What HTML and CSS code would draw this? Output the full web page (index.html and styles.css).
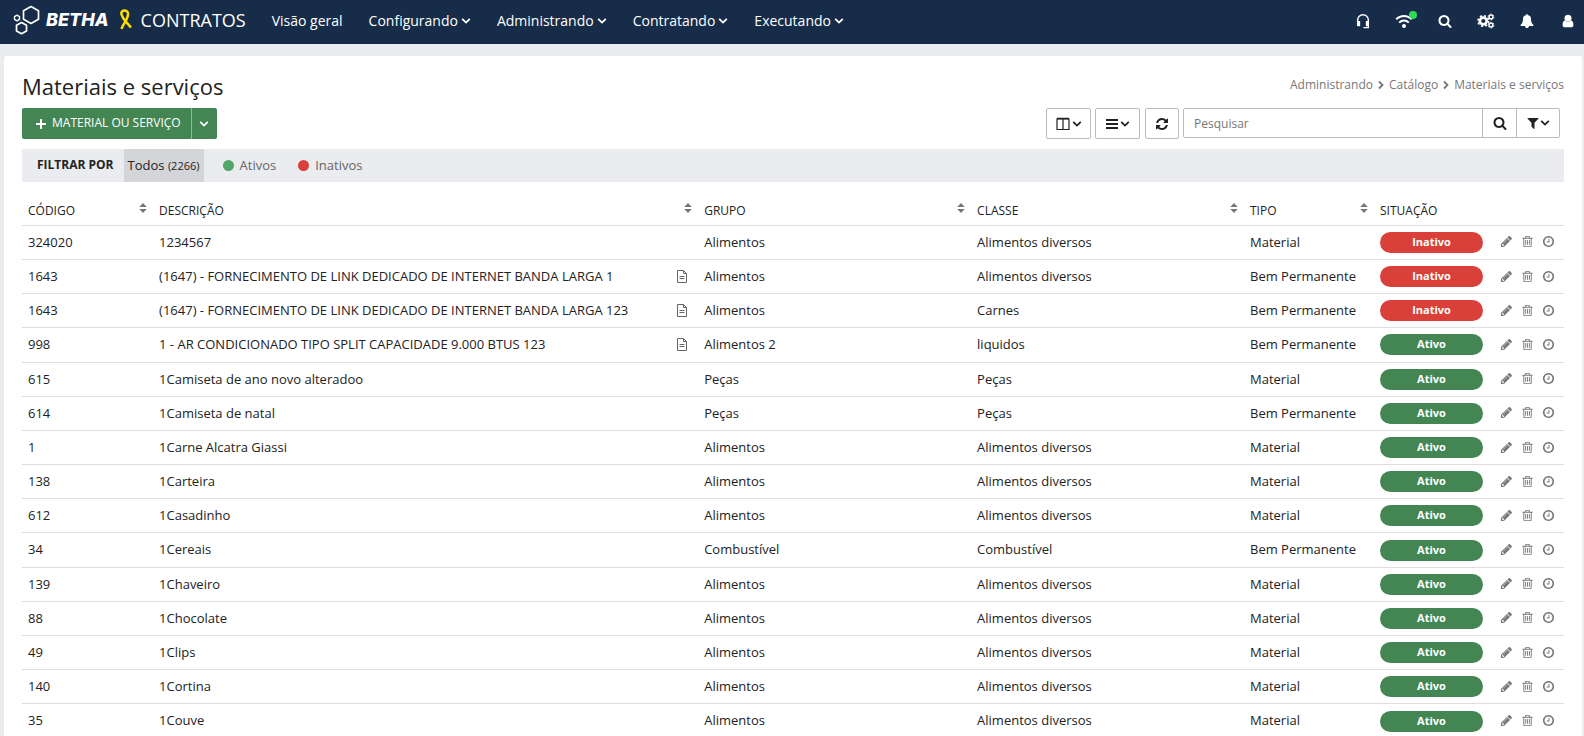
FILE: index.html
```html
<!DOCTYPE html>
<html lang="pt-BR">
<head>
<meta charset="utf-8">
<meta name="viewport" content="width=device-width, initial-scale=1">
<title>Materiais e serviços</title>
<link rel="stylesheet" href="styles.css">
</head>
<body>
<svg class="sprite" aria-hidden="true">
  <symbol id="search" viewBox="0 0 1792 1792"><path d="M1216 832q0-185-131.500-316.500t-316.500-131.500-316.500 131.500-131.500 316.500 131.500 316.500 316.500 131.500 316.500-131.500 131.500-316.500zm512 832q0 52-38 90t-90 38q-54 0-90-38l-343-342q-179 124-399 124-143 0-273.500-55.500t-225-150-150-225-55.500-273.500 55.500-273.500 150-225 225-150 273.500-55.500 273.500 55.500 225 150 150 225 55.500 273.500q0 220-124 399l343 343q37 37 37 90z"/></symbol>
  <symbol id="bell" viewBox="0 0 1792 1792"><path d="M1728 1408q0 52-38 90t-90 38h-448q0 106-75 181t-181 75-181-75-75-181h-448q-52 0-90-38t-38-90q50-42 91-88t85-119.500 74.500-158.500 50-206 19.500-260q0-152 117-282.500t307-158.500q-8-19-8-39 0-40 28-68t68-28 68 28 28 68q0 20-8 39 190 28 307 158.500t117 282.500q0 139 19.500 260t50 206 74.500 158.500 85 119.500 91 88z"/></symbol>
  <symbol id="user" viewBox="0 0 14 14"><circle cx="7" cy="4.300" r="3.500"/><path d="M3.700 6.500C2.300 6.900 1.600 8.600 1.600 11c0 1.400.9 2.300 2.200 2.300h6.400c1.300 0 2.200-.9 2.200-2.300 0-2.400-.7-4.100-2.100-4.500a4.600 4.600 0 0 1-6.600 0z"/></symbol>
  <symbol id="headset" viewBox="0 0 16 18"><path d="M2 10V8a6 6 0 0 1 12 0v2" fill="none" stroke="currentColor" stroke-width="1.600"/><path d="M1.200 9h3.600v6H2.600a1.400 1.400 0 0 1-1.400-1.400zM11.200 9h3.600v6h-3.600z"/><path d="M14 14v2.500H8.500" fill="none" stroke="currentColor" stroke-width="1.500"/></symbol>
  <symbol id="wifi" viewBox="0 0 18 16"><g fill="none" stroke="currentColor" stroke-width="2"><path d="M1.200 6.200C5.500 1.800 12.500 1.800 16.800 6.200"/><path d="M4.200 9.600c2.700-2.700 6.900-2.700 9.600 0"/></g><circle cx="9" cy="13" r="2"/></symbol>
  <symbol id="gears" viewBox="0 0 18 16"><g fill="none" stroke="currentColor"><circle cx="6.300" cy="8" r="3.400" stroke-width="2.600"/><circle cx="6.300" cy="8" r="5.300" stroke-width="1.600" stroke-dasharray="2.160 2"/><circle cx="14" cy="3.900" r="1.900" stroke-width="1.400"/><circle cx="14" cy="3.900" r="2.900" stroke-width="1" stroke-dasharray="1.500 1.530"/><circle cx="14" cy="12.100" r="1.900" stroke-width="1.400"/><circle cx="14" cy="12.100" r="2.900" stroke-width="1" stroke-dasharray="1.500 1.530"/></g></symbol>
  <symbol id="pencil" viewBox="0 0 1792 1792"><path d="M491 1536l91-91-235-235-91 91v107h128v128h107zm523-928q0-22-22-22-10 0-17 7l-542 542q-7 7-7 17 0 22 22 22 10 0 17-7l542-542q7-7 7-17zm-54-192l416 416-832 832h-416v-416zm683 96q0 53-37 90l-166 166-416-416 166-165q36-38 90-38 53 0 91 38l235 234q37 39 37 91z"/></symbol>
  <symbol id="trash" viewBox="0 0 1792 1792"><path d="M704 736v576q0 14-9 23t-23 9h-64q-14 0-23-9t-9-23v-576q0-14 9-23t23-9h64q14 0 23 9t9 23zm256 0v576q0 14-9 23t-23 9h-64q-14 0-23-9t-9-23v-576q0-14 9-23t23-9h64q14 0 23 9t9 23zm256 0v576q0 14-9 23t-23 9h-64q-14 0-23-9t-9-23v-576q0-14 9-23t23-9h64q14 0 23 9t9 23zm128 724v-948h-896v948q0 22 7 40.500t14.500 27 10.500 8.500h832q3 0 10.500-8.500t14.500-27 7-40.500zm-672-1076h448l-48-117q-7-9-17-11h-317q-10 2-17 11zm928 32v64q0 14-9 23t-23 9h-96v948q0 83-47 143.500t-113 60.500h-832q-66 0-113-58.500t-47-141.500v-952h-96q-14 0-23-9t-9-23v-64q0-14 9-23t23-9h309l70-167q15-37 54-63t79-26h320q40 0 79 26t54 63l70 167h309q14 0 23 9t9 23z"/></symbol>
  <symbol id="clock" viewBox="0 0 1792 1792"><path d="M1024 544v448q0 14-9 23t-23 9h-320q-14 0-23-9t-9-23v-64q0-14 9-23t23-9h224v-352q0-14 9-23t23-9h64q14 0 23 9t9 23zm416 352q0-148-73-273t-198-198-273-73-273 73-198 198-73 273 73 273 198 198 273 73 273-73 198-198 73-273zm224 0q0 209-103 385.500t-279.500 279.500-385.500 103-385.500-103-279.500-279.500-103-385.500 103-385.500 279.500-279.500 385.500-103 385.500 103 279.500 279.500 103 385.500z"/></symbol>
  <symbol id="filter" viewBox="0 0 1792 1792"><path d="M1595 295q17 41-14 70l-493 493v742q0 42-39 59-13 5-25 5-27 0-45-19l-256-256q-19-19-19-45v-486l-493-493q-31-29-14-70 17-39 59-39h1280q42 0 59 39z"/></symbol>
  <symbol id="refresh" viewBox="0 0 1792 1792"><path d="M1639 1056q0 5-1 7-64 268-268 434.500t-478 166.500q-146 0-282.500-55t-243.500-157l-129 129q-19 19-45 19t-45-19-19-45v-448q0-26 19-45t45-19h448q26 0 45 19t19 45-19 45l-137 137q71 66 161 102t187 36q134 0 250-65t186-179q11-17 53-117 8-23 30-23h192q13 0 22.500 9.500t9.500 22.500zm25-800v448q0 26-19 45t-45 19h-448q-26 0-45-19t-19-45 19-45l138-138q-148-137-349-137-134 0-250 65t-186 179q-11 17-53 117-8 23-30 23h-199q-13 0-22.500-9.500t-9.500-22.500v-7q65-268 270-434.500t480-166.500q146 0 284 55.500t245 156.500l130-129q19-19 45-19t45 19 19 45z"/></symbol>
  <symbol id="file" viewBox="0 0 12 13"><g fill="none" stroke="currentColor"><path d="M1.500.5h6L10.500 3.500v9h-9z"/><path d="M7.500.5v3h3M3.500 6.500h5M3.500 8.500h5"/></g></symbol>
  <symbol id="columns" viewBox="0 0 14 13"><path d="M1 1.500h12v10.500H1zM7 1v11" fill="none" stroke="currentColor" stroke-width="1.200"/><path d="M1 1h12" stroke="currentColor" stroke-width="1.500"/></symbol>
  <symbol id="bars" viewBox="0 0 12 12"><path d="M0 1h12v2H0zM0 5h12v2H0zM0 9h12v2H0z"/></symbol>
  <symbol id="plus" viewBox="0 0 10 10"><path d="M5 0v10M0 5h10" stroke="currentColor" stroke-width="2"/></symbol>
  <symbol id="down" viewBox="0 0 10 8"><path d="M1.200 1.800L5 5.600l3.800-3.800" fill="none" stroke="currentColor" stroke-width="1.800"/></symbol>
  <symbol id="right" viewBox="0 0 6 10"><path d="M1 1.500L4.500 5 1 8.500" fill="none" stroke="currentColor" stroke-width="1.800"/></symbol>
  <symbol id="sort" viewBox="0 0 8 10"><path d="M4 0l3.800 4H.2zM.2 6h7.600L4 10z"/></symbol>
</svg>

<header class="navbar">
  <a class="brand" href="#">
    <svg class="brand-mark" viewBox="0 0 28 30" aria-hidden="true"><g fill="none" stroke="#fff" stroke-width="1.700" stroke-linejoin="round"><path d="M18 1.500l7.500 4.200v8.600L18 18.500l-7.500-4.200V5.700z"/><path d="M8.500 17.500l5 2.800v5.600l-5 2.800-5-2.800v-5.600z"/><path d="M4 10.200l2.500 1.400v2.800L4 15.800l-2.500-1.400v-2.800z" stroke-width="1.400"/></g></svg>
    <span class="brand-name">BETHA</span>
    <svg class="brand-ribbon" viewBox="0 0 14 21" aria-hidden="true"><path d="M2.500 20C4 14.500 10 9.500 9 4 8 .5 3 .5 2.300 4 2 8 7 13 12 18.500" fill="none" stroke="#fd0" stroke-width="2.500"/></svg>
    <span class="brand-product">CONTRATOS</span>
  </a>
  <nav class="menu">
    <a href="#">Visão geral</a>
    <a href="#">Configurando <svg class="chev"><use href="#down"/></svg></a>
    <a href="#">Administrando <svg class="chev"><use href="#down"/></svg></a>
    <a href="#">Contratando <svg class="chev"><use href="#down"/></svg></a>
    <a href="#">Executando <svg class="chev"><use href="#down"/></svg></a>
  </nav>
  <div class="tools">
    <button aria-label="Suporte"><svg class="i18"><use href="#headset"/></svg></button>
    <button class="online" aria-label="Conexão"><svg class="i18"><use href="#wifi"/></svg></button>
    <button aria-label="Buscar"><svg class="i14"><use href="#search"/></svg></button>
    <button aria-label="Configurações"><svg class="i16"><use href="#gears"/></svg></button>
    <button aria-label="Notificações"><svg class="i14"><use href="#bell"/></svg></button>
    <button aria-label="Usuário"><svg class="i14"><use href="#user"/></svg></button>
  </div>
</header>

<main class="panel">
  <div class="heading">
    <h1>Materiais e serviços</h1>
    <nav class="crumbs"><a href="#">Administrando</a><svg><use href="#right"/></svg><a href="#">Catálogo</a><svg><use href="#right"/></svg><a href="#">Materiais e serviços</a></nav>
  </div>

  <div class="actions">
    <div class="split">
      <button class="add"><svg class="i10"><use href="#plus"/></svg>MATERIAL OU SERVIÇO</button>
      <button class="more" aria-label="Mais opções"><svg class="chev"><use href="#down"/></svg></button>
    </div>
    <div class="controls">
      <button class="btn wide" aria-label="Colunas"><svg class="i14"><use href="#columns"/></svg><svg class="chev"><use href="#down"/></svg></button>
      <button class="btn wide" aria-label="Densidade"><svg class="i12"><use href="#bars"/></svg><svg class="chev"><use href="#down"/></svg></button>
      <button class="btn refresh" aria-label="Atualizar"><svg class="i14"><use href="#refresh"/></svg></button>
      <form class="search">
        <input type="text" placeholder="Pesquisar" aria-label="Pesquisar">
        <button type="button" aria-label="Buscar"><svg class="i14"><use href="#search"/></svg></button>
        <button type="button" class="filter" aria-label="Filtros"><svg class="i14"><use href="#filter"/></svg><svg class="chev"><use href="#down"/></svg></button>
      </form>
    </div>
  </div>

  <div class="filters">
    <strong>FILTRAR POR</strong>
    <button class="active">Todos <small>(2266)</small></button>
    <button><i class="dot green"></i>Ativos</button>
    <button><i class="dot red"></i>Inativos</button>
  </div>

  <table class="grid">
    <thead>
      <tr>
        <th class="c-code"><span>CÓDIGO<svg><use href="#sort"/></svg></span></th>
        <th><span>DESCRIÇÃO<svg><use href="#sort"/></svg></span></th>
        <th class="c-group"><span>GRUPO<svg><use href="#sort"/></svg></span></th>
        <th class="c-group"><span>CLASSE<svg><use href="#sort"/></svg></span></th>
        <th class="c-type"><span>TIPO<svg><use href="#sort"/></svg></span></th>
        <th class="c-status"><span>SITUAÇÃO</span></th>
        <th class="c-tools"></th>
      </tr>
    </thead>
    <tbody>
      <tr><td>324020</td><td>1234567</td><td>Alimentos</td><td>Alimentos diversos</td><td>Material</td><td class="st"><span class="badge off">Inativo</span></td><td class="ops"><div><button aria-label="Editar"><svg><use href="#pencil"/></svg></button><button aria-label="Excluir"><svg><use href="#trash"/></svg></button><button aria-label="Histórico"><svg><use href="#clock"/></svg></button></div></td></tr>
      <tr><td>1643</td><td><div class="desc">(1647) - FORNECIMENTO DE LINK DEDICADO DE INTERNET BANDA LARGA 1<svg><use href="#file"/></svg></div></td><td>Alimentos</td><td>Alimentos diversos</td><td>Bem Permanente</td><td class="st"><span class="badge off">Inativo</span></td><td class="ops"><div><button aria-label="Editar"><svg><use href="#pencil"/></svg></button><button aria-label="Excluir"><svg><use href="#trash"/></svg></button><button aria-label="Histórico"><svg><use href="#clock"/></svg></button></div></td></tr>
      <tr><td>1643</td><td><div class="desc">(1647) - FORNECIMENTO DE LINK DEDICADO DE INTERNET BANDA LARGA 123<svg><use href="#file"/></svg></div></td><td>Alimentos</td><td>Carnes</td><td>Bem Permanente</td><td class="st"><span class="badge off">Inativo</span></td><td class="ops"><div><button aria-label="Editar"><svg><use href="#pencil"/></svg></button><button aria-label="Excluir"><svg><use href="#trash"/></svg></button><button aria-label="Histórico"><svg><use href="#clock"/></svg></button></div></td></tr>
      <tr><td>998</td><td><div class="desc">1 - AR CONDICIONADO TIPO SPLIT CAPACIDADE 9.000 BTUS 123<svg><use href="#file"/></svg></div></td><td>Alimentos 2</td><td>liquidos</td><td>Bem Permanente</td><td class="st"><span class="badge">Ativo</span></td><td class="ops"><div><button aria-label="Editar"><svg><use href="#pencil"/></svg></button><button aria-label="Excluir"><svg><use href="#trash"/></svg></button><button aria-label="Histórico"><svg><use href="#clock"/></svg></button></div></td></tr>
      <tr><td>615</td><td>1Camiseta de ano novo alteradoo</td><td>Peças</td><td>Peças</td><td>Material</td><td class="st"><span class="badge">Ativo</span></td><td class="ops"><div><button aria-label="Editar"><svg><use href="#pencil"/></svg></button><button aria-label="Excluir"><svg><use href="#trash"/></svg></button><button aria-label="Histórico"><svg><use href="#clock"/></svg></button></div></td></tr>
      <tr><td>614</td><td>1Camiseta de natal</td><td>Peças</td><td>Peças</td><td>Bem Permanente</td><td class="st"><span class="badge">Ativo</span></td><td class="ops"><div><button aria-label="Editar"><svg><use href="#pencil"/></svg></button><button aria-label="Excluir"><svg><use href="#trash"/></svg></button><button aria-label="Histórico"><svg><use href="#clock"/></svg></button></div></td></tr>
      <tr><td>1</td><td>1Carne Alcatra Giassi</td><td>Alimentos</td><td>Alimentos diversos</td><td>Material</td><td class="st"><span class="badge">Ativo</span></td><td class="ops"><div><button aria-label="Editar"><svg><use href="#pencil"/></svg></button><button aria-label="Excluir"><svg><use href="#trash"/></svg></button><button aria-label="Histórico"><svg><use href="#clock"/></svg></button></div></td></tr>
      <tr><td>138</td><td>1Carteira</td><td>Alimentos</td><td>Alimentos diversos</td><td>Material</td><td class="st"><span class="badge">Ativo</span></td><td class="ops"><div><button aria-label="Editar"><svg><use href="#pencil"/></svg></button><button aria-label="Excluir"><svg><use href="#trash"/></svg></button><button aria-label="Histórico"><svg><use href="#clock"/></svg></button></div></td></tr>
      <tr><td>612</td><td>1Casadinho</td><td>Alimentos</td><td>Alimentos diversos</td><td>Material</td><td class="st"><span class="badge">Ativo</span></td><td class="ops"><div><button aria-label="Editar"><svg><use href="#pencil"/></svg></button><button aria-label="Excluir"><svg><use href="#trash"/></svg></button><button aria-label="Histórico"><svg><use href="#clock"/></svg></button></div></td></tr>
      <tr><td>34</td><td>1Cereais</td><td>Combustível</td><td>Combustível</td><td>Bem Permanente</td><td class="st"><span class="badge">Ativo</span></td><td class="ops"><div><button aria-label="Editar"><svg><use href="#pencil"/></svg></button><button aria-label="Excluir"><svg><use href="#trash"/></svg></button><button aria-label="Histórico"><svg><use href="#clock"/></svg></button></div></td></tr>
      <tr><td>139</td><td>1Chaveiro</td><td>Alimentos</td><td>Alimentos diversos</td><td>Material</td><td class="st"><span class="badge">Ativo</span></td><td class="ops"><div><button aria-label="Editar"><svg><use href="#pencil"/></svg></button><button aria-label="Excluir"><svg><use href="#trash"/></svg></button><button aria-label="Histórico"><svg><use href="#clock"/></svg></button></div></td></tr>
      <tr><td>88</td><td>1Chocolate</td><td>Alimentos</td><td>Alimentos diversos</td><td>Material</td><td class="st"><span class="badge">Ativo</span></td><td class="ops"><div><button aria-label="Editar"><svg><use href="#pencil"/></svg></button><button aria-label="Excluir"><svg><use href="#trash"/></svg></button><button aria-label="Histórico"><svg><use href="#clock"/></svg></button></div></td></tr>
      <tr><td>49</td><td>1Clips</td><td>Alimentos</td><td>Alimentos diversos</td><td>Material</td><td class="st"><span class="badge">Ativo</span></td><td class="ops"><div><button aria-label="Editar"><svg><use href="#pencil"/></svg></button><button aria-label="Excluir"><svg><use href="#trash"/></svg></button><button aria-label="Histórico"><svg><use href="#clock"/></svg></button></div></td></tr>
      <tr><td>140</td><td>1Cortina</td><td>Alimentos</td><td>Alimentos diversos</td><td>Material</td><td class="st"><span class="badge">Ativo</span></td><td class="ops"><div><button aria-label="Editar"><svg><use href="#pencil"/></svg></button><button aria-label="Excluir"><svg><use href="#trash"/></svg></button><button aria-label="Histórico"><svg><use href="#clock"/></svg></button></div></td></tr>
      <tr><td>35</td><td>1Couve</td><td>Alimentos</td><td>Alimentos diversos</td><td>Material</td><td class="st"><span class="badge">Ativo</span></td><td class="ops"><div><button aria-label="Editar"><svg><use href="#pencil"/></svg></button><button aria-label="Excluir"><svg><use href="#trash"/></svg></button><button aria-label="Histórico"><svg><use href="#clock"/></svg></button></div></td></tr>
    </tbody>
  </table>
</main>
</body>
</html>
```

FILE: styles.css
```css
* { box-sizing: border-box; }

body {
  margin: 0;
  background: #ebecf0;
  color: #222;
  font: 13px/1.4 "Open Sans", "Noto Sans", sans-serif;
  overflow: hidden;
}

a { color: inherit; text-decoration: none; }
button { margin: 0; padding: 0; border: 0; background: none; color: inherit; font: inherit; cursor: pointer; }
svg { display: block; flex: none; fill: currentColor; }
.sprite { display: none; }

.i10 { width: 10px; height: 10px; }
.i12 { width: 12px; height: 12px; }
.i14 { width: 14px; height: 14px; }
.i16 { width: 18px; height: 16px; }
.i18 { width: 18px; height: 16px; }
.chev { width: 10px; height: 8px; }

/* Top bar */
.navbar { display: flex; align-items: center; height: 44px; padding: 0 4px 0 13px; background: #162c48; color: #fff; }
.brand { display: flex; align-items: center; padding-bottom: 5px; }
.brand-mark { width: 28px; height: 30px; }
.brand-name { margin-left: 5px; font: italic 800 18px/24px Inter, "Open Sans", sans-serif; }
.brand-ribbon { width: 14px; height: 21px; margin: 0 8px 0 10px; }
.brand-product { font-size: 18px; line-height: 24px; }
.menu { display: flex; gap: 26px; margin-left: 26px; padding-bottom: 2px; font-size: 14px; line-height: 20px; }
.menu a { display: flex; align-items: center; gap: 3px; }
.tools { display: flex; gap: 17px; margin-left: auto; padding-bottom: 2px; }
.tools button { position: relative; display: flex; align-items: center; justify-content: center; width: 24px; height: 20px; }
.online::after { content: ""; position: absolute; top: 0; right: -1px; width: 8px; height: 8px; border-radius: 50%; background: #2fdc5a; }

/* Page panel */
.panel { margin: 12px 2px 0 4px; padding: 16px 18px 0; border-radius: 3px; background: #fff; }
.heading { display: flex; align-items: center; justify-content: space-between; }
h1 { margin: 0; font-size: 22px; line-height: 28px; font-weight: 400; }
.crumbs { display: flex; align-items: center; gap: 5px; padding-bottom: 2px; color: #777; font-size: 12px; line-height: 16px; }
.crumbs svg { width: 6px; height: 10px; }

.actions { display: flex; justify-content: space-between; margin-top: 8px; padding-right: 4px; }
.split { display: flex; height: 31px; border-radius: 2px; overflow: hidden; background: #438653; color: #fff; }
.add { display: flex; align-items: center; gap: 6px; padding: 0 10px 0 14px; font-size: 12px; }
.more { display: flex; align-items: center; justify-content: center; width: 26px; border-left: 1px solid #8fb999; }

.controls { display: flex; align-items: flex-start; gap: 4px; }
.btn { display: flex; align-items: center; justify-content: center; gap: 2px; width: 34px; height: 31px; border: 1px solid #bbb; border-radius: 2px; background: #fff; }
.btn.wide { width: 45px; }
.refresh { margin-left: 1px; }
.search { display: flex; width: 24vw; max-width: 377px; height: 30px; border: 1px solid #bbb; border-radius: 2px; }
.search input { flex: 1; min-width: 0; padding: 0 10px; border: 0; outline: 0; background: none; font: 12px "Open Sans", "Noto Sans", sans-serif; }
.search input::placeholder { color: #777; opacity: 1; }
.search button { display: flex; align-items: center; justify-content: center; width: 34px; border-left: 1px solid #bbb; }
.search .filter { width: 43px; }

.filters { display: flex; align-items: stretch; height: 33px; margin-top: 10px; padding-left: 15px; background: #ebecf0; color: #666; }
.filters strong { padding-right: 10px; color: #222; font-size: 12px; line-height: 31px; }
.filters button { display: flex; align-items: center; margin-left: 19px; }
.filters button:last-child { margin-left: 22px; }
.filters .active { display: block; margin: 0; padding: 0 4px; background: #d4d5d8; color: #222; }
.filters small { font-size: 11px; }
.dot { width: 11px; height: 11px; margin-right: 6px; border-radius: 50%; }
.green { background: #53a668; }
.red { background: #d84039; }

/* Materials table */
.grid { width: 100%; margin-top: 12px; border-collapse: collapse; table-layout: fixed; }
.c-code { width: 8.5%; }
.c-group { width: 17.7%; }
.c-type { width: 130px; }
.c-status { width: 115px; }
.c-tools { width: 75px; }
th, td { padding: 7px 6px 8px; border-bottom: 1px solid #ddd; text-align: left; vertical-align: middle; white-space: nowrap; }
.grid th { padding: 9px 6px 5px; font-size: 12px; font-weight: 400; }
th span { display: flex; justify-content: space-between; align-items: flex-start; }
th svg { width: 8px; height: 10px; color: #777; }
.desc { display: flex; align-items: center; justify-content: space-between; padding-right: 4px; }
.desc svg { width: 12px; height: 13px; color: #666; }
.grid .st { padding: 5px 6px; }
.badge { display: block; height: 21px; border-radius: 11px; background: #438653; color: #fff; font-size: 11px; line-height: 20px; font-weight: 700; text-align: center; }
.badge.off { background: #d84039; }
.ops div { display: flex; gap: 8px; padding-left: 5px; }
.ops svg { width: 13px; height: 13px; color: #777; }
```
